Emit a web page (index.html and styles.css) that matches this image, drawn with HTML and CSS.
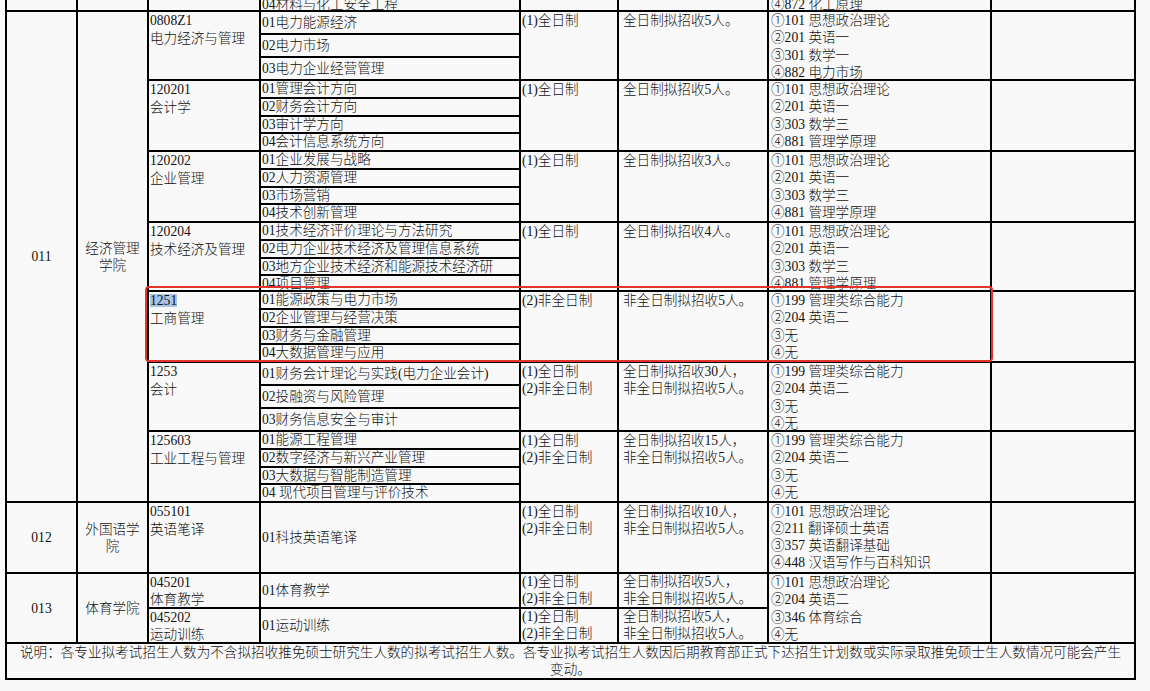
FILE: index.html
```html
<!DOCTYPE html>
<html lang="zh-CN">
<head>
<meta charset="utf-8">
<title>招生专业目录</title>
<link rel="stylesheet" href="styles.css">
</head>
<body>
<div class="page">
<table class="plan">
<colgroup>
<col class="c1"><col class="c2"><col class="c3"><col class="c4"><col class="c5"><col class="c6"><col class="c7"><col class="c8">
</colgroup>
<tbody>
<tr class="partial">
<td></td><td></td><td></td>
<td class="dir bottom">04材料与化工安全工程</td>
<td></td><td></td>
<td class="exam bottom">④872 化工原理</td>
<td></td>
</tr>

<tr>
<td class="dept" rowspan="26">011</td>
<td class="dept" rowspan="26">经济管理学院</td>
<td class="code" rowspan="3">0808Z1<br>电力经济与管理</td>
<td class="dir">01电力能源经济</td>
<td class="mode" rowspan="3">(1)全日制</td>
<td class="num" rowspan="3">全日制拟招收5人。</td>
<td class="exam" rowspan="3"><div class="box">①101 思想政治理论<br>②201 英语一<br>③301 数学一<br>④882 电力市场</div></td>
<td class="memo" rowspan="3"></td>
</tr>
<tr><td class="dir">02电力市场</td></tr>
<tr><td class="dir">03电力企业经营管理</td></tr>

<tr>
<td class="code" rowspan="4">120201<br>会计学</td>
<td class="dir">01管理会计方向</td>
<td class="mode" rowspan="4">(1)全日制</td>
<td class="num" rowspan="4">全日制拟招收5人。</td>
<td class="exam" rowspan="4"><div class="box">①101 思想政治理论<br>②201 英语一<br>③303 数学三<br>④881 管理学原理</div></td>
<td class="memo" rowspan="4"></td>
</tr>
<tr><td class="dir">02财务会计方向</td></tr>
<tr><td class="dir">03审计学方向</td></tr>
<tr><td class="dir">04会计信息系统方向</td></tr>

<tr>
<td class="code" rowspan="4">120202<br>企业管理</td>
<td class="dir">01企业发展与战略</td>
<td class="mode" rowspan="4">(1)全日制</td>
<td class="num" rowspan="4">全日制拟招收3人。</td>
<td class="exam" rowspan="4"><div class="box">①101 思想政治理论<br>②201 英语一<br>③303 数学三<br>④881 管理学原理</div></td>
<td class="memo" rowspan="4"></td>
</tr>
<tr><td class="dir">02人力资源管理</td></tr>
<tr><td class="dir">03市场营销</td></tr>
<tr><td class="dir">04技术创新管理</td></tr>

<tr>
<td class="code" rowspan="4">120204<br>技术经济及管理</td>
<td class="dir">01技术经济评价理论与方法研究</td>
<td class="mode" rowspan="4">(1)全日制</td>
<td class="num" rowspan="4">全日制拟招收4人。</td>
<td class="exam" rowspan="4"><div class="box">①101 思想政治理论<br>②201 英语一<br>③303 数学三<br>④881 管理学原理</div></td>
<td class="memo" rowspan="4"></td>
</tr>
<tr><td class="dir">02电力企业技术经济及管理信息系统</td></tr>
<tr><td class="dir"><div class="clip wrap">03地方企业技术经济和能源技术经济研究</div></td></tr>
<tr><td class="dir top"><div class="clip short">04项目管理</div></td></tr>

<tr>
<td class="code" rowspan="4"><span class="sel">1251</span><br>工商管理</td>
<td class="dir">01能源政策与电力市场</td>
<td class="mode" rowspan="4">(2)非全日制</td>
<td class="num" rowspan="4">非全日制拟招收5人。</td>
<td class="exam" rowspan="4"><div class="box">①199 管理类综合能力<br>②204 英语二<br>③无<br>④无</div></td>
<td class="memo" rowspan="4"></td>
</tr>
<tr><td class="dir">02企业管理与经营决策</td></tr>
<tr><td class="dir">03财务与金融管理</td></tr>
<tr><td class="dir">04大数据管理与应用</td></tr>

<tr>
<td class="code" rowspan="3">1253<br>会计</td>
<td class="dir">01财务会计理论与实践(电力企业会计)</td>
<td class="mode" rowspan="3">(1)全日制<br>(2)非全日制</td>
<td class="num" rowspan="3">全日制拟招收30人，<br>非全日制拟招收5人。</td>
<td class="exam" rowspan="3"><div class="box">①199 管理类综合能力<br>②204 英语二<br>③无<br>④无</div></td>
<td class="memo" rowspan="3"></td>
</tr>
<tr><td class="dir">02投融资与风险管理</td></tr>
<tr><td class="dir">03财务信息安全与审计</td></tr>

<tr>
<td class="code" rowspan="4">125603<br>工业工程与管理</td>
<td class="dir">01能源工程管理</td>
<td class="mode" rowspan="4">(1)全日制<br>(2)非全日制</td>
<td class="num" rowspan="4">全日制拟招收15人，<br>非全日制拟招收5人。</td>
<td class="exam" rowspan="4"><div class="box">①199 管理类综合能力<br>②204 英语二<br>③无<br>④无</div></td>
<td class="memo" rowspan="4"></td>
</tr>
<tr><td class="dir">02数字经济与新兴产业管理</td></tr>
<tr><td class="dir">03大数据与智能制造管理</td></tr>
<tr><td class="dir">04 现代项目管理与评价技术</td></tr>

<tr>
<td class="dept">012</td>
<td class="dept">外国语学院</td>
<td class="code">055101<br>英语笔译</td>
<td class="dir">01科技英语笔译</td>
<td class="mode">(1)全日制<br>(2)非全日制</td>
<td class="num">全日制拟招收10人，<br>非全日制拟招收5人。</td>
<td class="exam"><div class="box wide">①101 思想政治理论<br>②211 翻译硕士英语<br>③357 英语翻译基础<br>④448 汉语写作与百科知识</div></td>
<td class="memo"></td>
</tr>

<tr>
<td class="dept" rowspan="2">013</td>
<td class="dept" rowspan="2">体育学院</td>
<td class="code"><div class="pair">045201<br>体育教学</div></td>
<td class="dir">01体育教学</td>
<td class="mode tight">(1)全日制<br>(2)非全日制</td>
<td class="num tight">全日制拟招收5人，<br>非全日制拟招收5人。</td>
<td class="exam" rowspan="2"><div class="box">①101 思想政治理论<br>②204 英语二<br>③346 体育综合<br>④无</div></td>
<td class="memo" rowspan="2"></td>
</tr>
<tr>
<td class="code"><div class="pair">045202<br>运动训练</div></td>
<td class="dir">01运动训练</td>
<td class="mode tight">(1)全日制<br>(2)非全日制</td>
<td class="num tight">全日制拟招收5人，<br>非全日制拟招收5人。</td>
</tr>

<tr>
<td class="note" colspan="8">说明：各专业拟考试招生人数为不含拟招收推免硕士研究生人数的拟考试招生人数。各专业拟考试招生人数因后期教育部正式下达招生计划数或实际录取推免硕士生人数情况可能会产生变动。</td>
</tr>
</tbody>
</table>
<div class="mark"></div>
</div>
</body>
</html>
```

FILE: styles.css
```css
html, body {
  margin: 0;
  padding: 0;
  background: #f9f9f9;
}

body {
  width: 1150px;
  height: 691px;
  overflow: hidden;
  font-family: "Liberation Serif", "Noto Sans CJK SC", serif;
  color: #111;
}

.page {
  position: relative;
  display: flow-root;
}

.plan {
  border-collapse: collapse;
  table-layout: fixed;
  width: 1131px;
  margin: -2px 0 0 5px;
  font-size: 13.6px;
  line-height: 17px;
}

.plan col.c1 { width: 71px; }
.plan col.c2 { width: 71px; }
.plan col.c3 { width: 112px; }
.plan col.c4 { width: 260px; }
.plan col.c5 { width: 98px; }
.plan col.c6 { width: 150px; }
.plan col.c7 { width: 223px; }
.plan col.c8 { width: 144px; }

.plan td {
  border: 2px solid #000;
  padding: 0 1px;
  vertical-align: top;
  font-weight: 300;
}

.plan td.dept {
  text-align: center;
  vertical-align: middle;
  padding: 0 2px;
}

.plan td.code {
  line-height: 18px;
}

.pair {
  height: 33px;
  line-height: 17px;
}

.plan td.dir {
  vertical-align: middle;
  line-height: 15.75px;
}

.plan td.dir.top {
  vertical-align: top;
}

.plan tr.partial td {
  vertical-align: bottom;
  line-height: 10px;
}

.plan td.num {
  padding-left: 4px;
}

.plan td.tight {
  line-height: 16.5px;
}

.plan td.exam {
  padding: 0 2px;
}

.box {
  height: 67px;
  line-height: 17.4px;
}

.box.wide {
  height: 69px;
  line-height: 17px;
}

.clip {
  height: 15.75px;
  overflow: hidden;
}

.clip.wrap {
  padding-right: 14px;
}

.clip.short {
  height: 13.75px;
}

.plan td.note {
  text-align: center;
  line-height: 17px;
  padding: 0 10px;
}

.sel {
  display: inline-block;
  line-height: 13px;
  background: #a9c5e6;
}

.mark {
  position: absolute;
  left: 145px;
  top: 286px;
  width: 848px;
  height: 76px;
  box-sizing: border-box;
  border: 2px solid #e4342e;
  border-radius: 4px;
}
```
